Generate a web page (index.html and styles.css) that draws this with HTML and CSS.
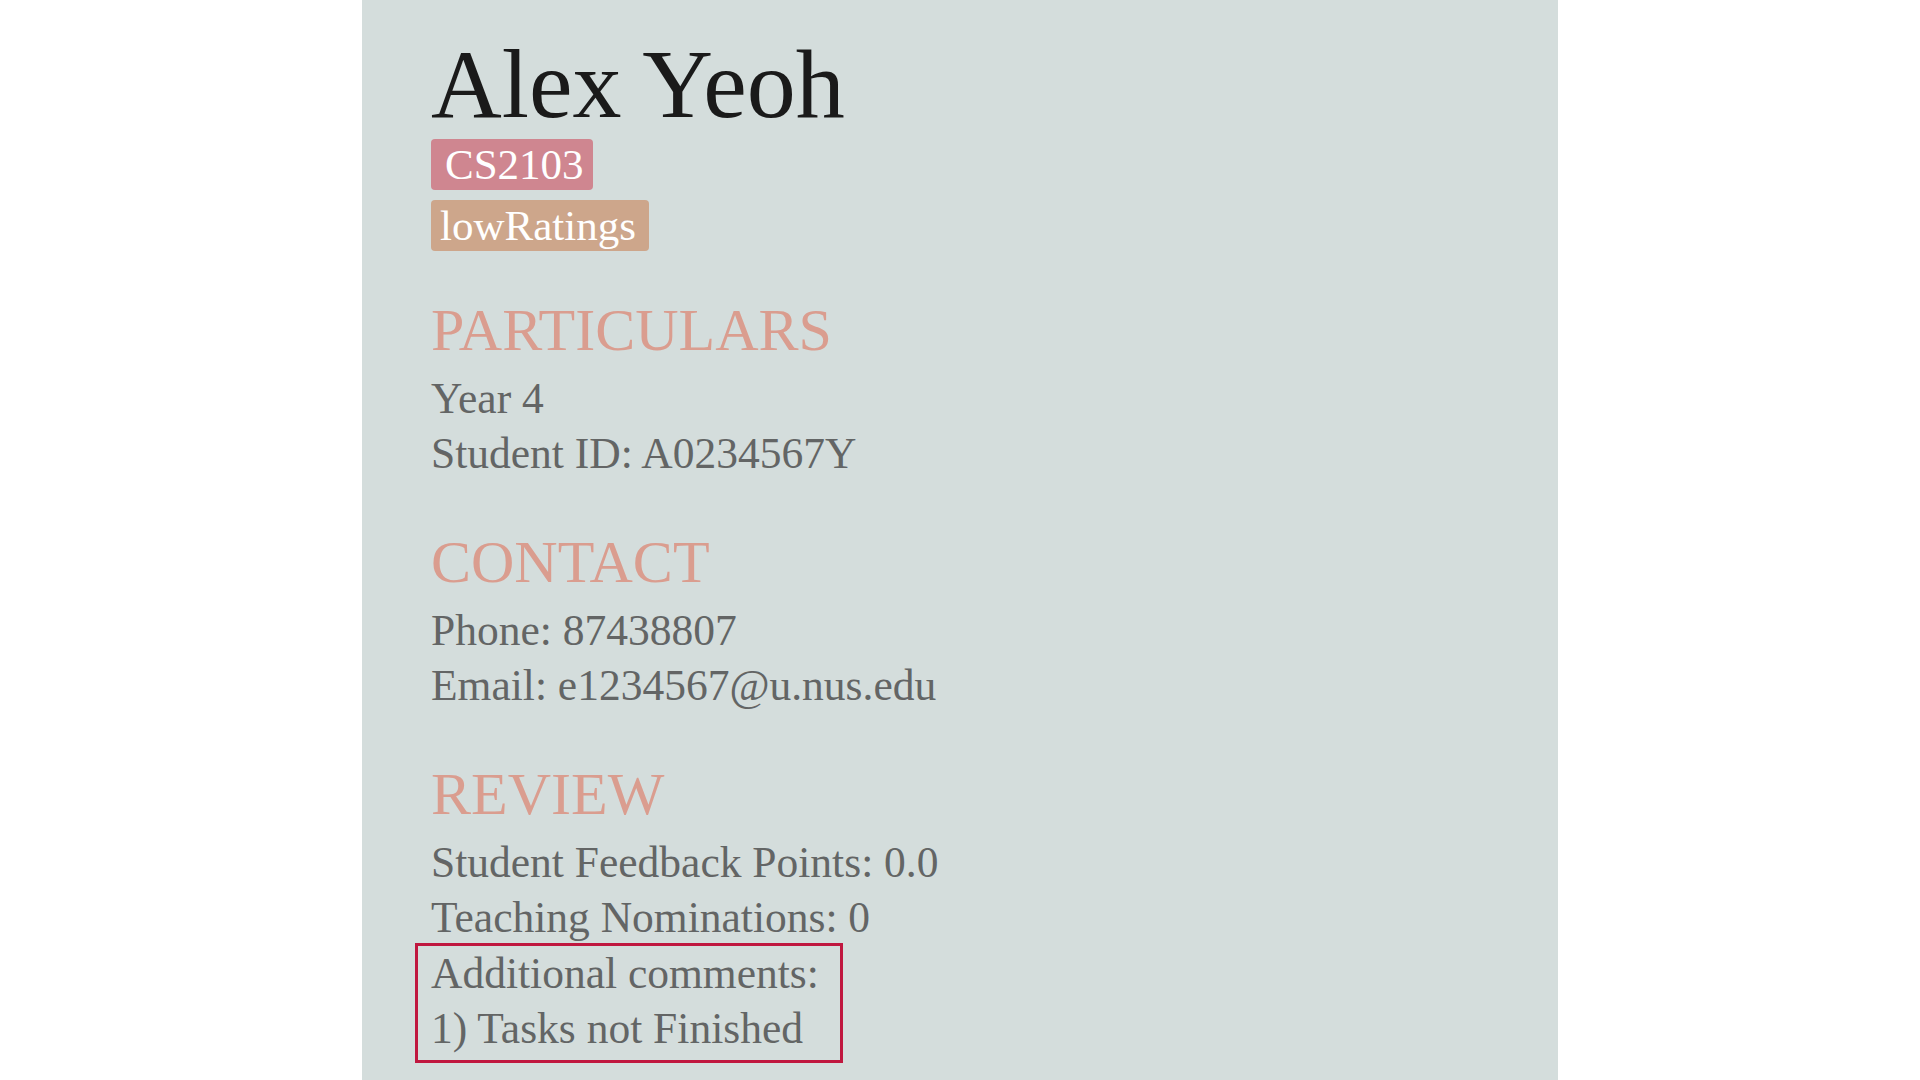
FILE: index.html
```html
<!DOCTYPE html>
<html lang="en">
<head>
<meta charset="utf-8">
<title>Alex Yeoh</title>
<link rel="stylesheet" href="styles.css">
</head>
<body>
<main class="panel">
  <h1 class="name">Alex Yeoh</h1>
  <div class="tags">
    <span class="tag tag-module">CS2103</span>
    <span class="tag tag-rating">lowRatings</span>
  </div>

  <section class="section">
    <h2 class="section-title">PARTICULARS</h2>
    <p class="line">Year 4</p>
    <p class="line">Student ID: A0234567Y</p>
  </section>

  <section class="section">
    <h2 class="section-title">CONTACT</h2>
    <p class="line">Phone: 87438807</p>
    <p class="line">Email: e1234567@u.nus.edu</p>
  </section>

  <section class="section">
    <h2 class="section-title">REVIEW</h2>
    <p class="line">Student Feedback Points: 0.0</p>
    <p class="line">Teaching Nominations: 0</p>
    <div class="comments">
      <p class="line">Additional comments:</p>
      <p class="line">1) Tasks not Finished</p>
    </div>
  </section>
</main>
</body>
</html>
```

FILE: styles.css
```css
html, body {
  margin: 0;
  padding: 0;
  background: #ffffff;
}

body {
  font-family: "Liberation Serif", "Times New Roman", serif;
  overflow: hidden;
}

.panel {
  width: 1196px;
  min-height: 1080px;
  margin: 0 auto;
  box-sizing: border-box;
  background: #d4dddc;
  padding: 31px 0 0 69px;
}

.name {
  margin: 0;
  font-weight: normal;
  font-size: 98px;
  line-height: 107px;
  color: #1a1a1a;
}

.tags {
  display: flex;
  flex-direction: column;
  align-items: flex-start;
  gap: 10px;
  margin-top: 1px;
}

.tag {
  display: block;
  height: 51px;
  line-height: 51px;
  font-size: 43px;
  color: #ffffff;
  border-radius: 4px;
}

.tag-module {
  background: #cf8690;
  padding: 0 9px 0 14px;
}

.tag-rating {
  background: #cda68b;
  padding: 0 13px 0 9px;
}

.section {
  margin-top: 46px;
}

.section + .section {
  margin-top: 48px;
}

.section-title {
  margin: 0 0 8px 0;
  font-weight: normal;
  font-size: 60px;
  line-height: 66px;
  color: #da9d8f;
}

.line {
  margin: 0;
  font-size: 43.5px;
  line-height: 55px;
  color: #636565;
  white-space: nowrap;
}

.comments {
  box-sizing: border-box;
  width: 428px;
  margin: -2px 0 0 -16px;
  padding: 0 0 4px 13px;
  border: 3px solid #c0173f;
}
```
